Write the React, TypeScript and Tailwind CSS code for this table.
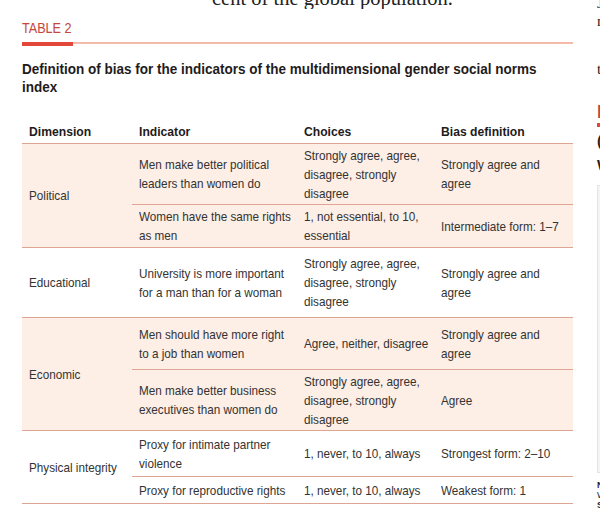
import React from "react";

const sans = "font-['Liberation_Sans',Arial,sans-serif]";
const squeeze = "origin-left scale-x-[0.9]";

type Row = { ind: string; ch: string; bias: string; h: string };
type Group = { dim: string; bg: string; rows: Row[] };

const groups: Group[] = [
  {
    dim: "Political",
    bg: "bg-[#fdeee6]",
    rows: [
      {
        ind: "Men make better political leaders than women do",
        ch: "Strongly agree, agree, disagree, strongly disagree",
        bias: "Strongly agree and agree",
        h: "h-[61px]",
      },
      {
        ind: "Women have the same rights as men",
        ch: "1, not essential, to 10, essential",
        bias: "Intermediate form: 1–7",
        h: "h-[42px]",
      },
    ],
  },
  {
    dim: "Educational",
    bg: "bg-white",
    rows: [
      {
        ind: "University is more important for a man than for a woman",
        ch: "Strongly agree, agree, disagree, strongly disagree",
        bias: "Strongly agree and agree",
        h: "h-[69px]",
      },
    ],
  },
  {
    dim: "Economic",
    bg: "bg-[#fdeee6]",
    rows: [
      {
        ind: "Men should have more right to a job than women",
        ch: "Agree, neither, disagree",
        bias: "Strongly agree and agree",
        h: "h-[52px]",
      },
      {
        ind: "Men make better business executives than women do",
        ch: "Strongly agree, agree, disagree, strongly disagree",
        bias: "Agree",
        h: "h-[60px]",
      },
    ],
  },
  {
    dim: "Physical integrity",
    bg: "bg-white",
    rows: [
      {
        ind: "Proxy for intimate partner violence",
        ch: "1, never, to 10, always",
        bias: "Strongest form: 2–10",
        h: "h-[46px]",
      },
      {
        ind: "Proxy for reproductive rights",
        ch: "1, never, to 10, always",
        bias: "Weakest form: 1",
        h: "h-[26px]",
      },
    ],
  },
];

// cell: outer width is the column, inner width is the unsqueezed text width
function Cell({ w, inner, children }: { w: string; inner: string; children: React.ReactNode }) {
  return (
    <div className={`${w} shrink-0 pl-[7px] flex items-center`}>
      <div className={`${inner} shrink-0 ${squeeze}`}>{children}</div>
    </div>
  );
}

export default function App() {
  return (
    <div className="w-[600px] h-[518px] overflow-hidden bg-white flex">
      <div className={`w-[573px] shrink-0 pl-[22px] ${sans}`}>
        <div className="h-[9px] overflow-hidden">
          <div className="-mt-[12px] pl-[190px] text-[20.5px] leading-[20px] text-[#222] font-['Liberation_Serif',serif] whitespace-nowrap">
            cent of the global population.
          </div>
        </div>

        <div className={`mt-[10px] text-[14.5px] leading-[18px] text-[#c4473d] whitespace-nowrap origin-left scale-x-[0.87]`}>
          TABLE 2
        </div>

        <div className="mt-[5px] flex items-start">
          <div className="w-[51px] h-[4px] bg-[#e2473a]" />
          <div className="flex-1 h-[2px] bg-[#f4bba9]" />
        </div>

        <h2
          className={`mt-[14px] w-[605px] text-[15px] leading-[18px] font-bold text-[#1f1b1c] ${squeeze}`}
        >
          Definition of bias for the indicators of the multidimensional gender social norms index
        </h2>

        <div className="mt-[24px] text-[13px] leading-[19px] text-[#333]">
          <div className="flex h-[24px] border-b border-[#dea494] font-bold text-[#1f1b1c] text-[13.5px]">
            <Cell w="w-[110px]" inner="w-[112px]">Dimension</Cell>
            <Cell w="w-[165px]" inner="w-[172px]">Indicator</Cell>
            <Cell w="w-[137px]" inner="w-[142px]">Choices</Cell>
            <Cell w="w-[139px]" inner="w-[144px]">Bias definition</Cell>
          </div>

          {groups.map((g) => (
            <div key={g.dim} className={`flex border-b border-[#dea494] ${g.bg}`}>
              <Cell w="w-[110px]" inner="w-[112px]">{g.dim}</Cell>
              <div className="flex-1 flex flex-col">
                {g.rows.map((r, i) => (
                  <div
                    key={r.ind}
                    className={`flex ${r.h} ${i < g.rows.length - 1 ? "border-b border-[#dea494]" : ""}`}
                  >
                    <Cell w="w-[165px]" inner="w-[172px]">{r.ind}</Cell>
                    <Cell w="w-[137px]" inner="w-[142px]">{r.ch}</Cell>
                    <Cell w="w-[139px]" inner="w-[144px]">{r.bias}</Cell>
                  </div>
                ))}
              </div>
            </div>
          ))}
        </div>
      </div>

      {/* next page column, clipped at the window edge */}
      <div className="ml-[24px] w-[120px] shrink-0 font-['Liberation_Serif',serif] text-[15px] leading-[18px] text-[#222]">
        <div className="-mt-[6px]">Jn</div>
        <div>rn</div>
        <div className="mt-[30px]">to</div>
        <div className={`${sans} mt-[24px] text-[18px] leading-[20px] text-[#c4473d] font-bold`}>F</div>
        <div className="mt-[1px] w-[10px] h-[4px] bg-[#e2473a]" />
        <div className={`${sans} mt-[2px] font-bold text-[15px] leading-[24px] text-[#231f20]`}>
          <div>(a</div>
          <div>Wo</div>
        </div>
        <div className="mt-[8px] h-[288px] bg-[#f4f4f4] border border-[#e4e4e4]" />
        <div className={`${sans} mt-[7px] text-[9px] leading-[10px] text-[#231f20]`}>
          <div className="font-bold">N</div>
          <div>W</div>
          <div className="font-bold">S</div>
        </div>
      </div>
    </div>
  );
}
